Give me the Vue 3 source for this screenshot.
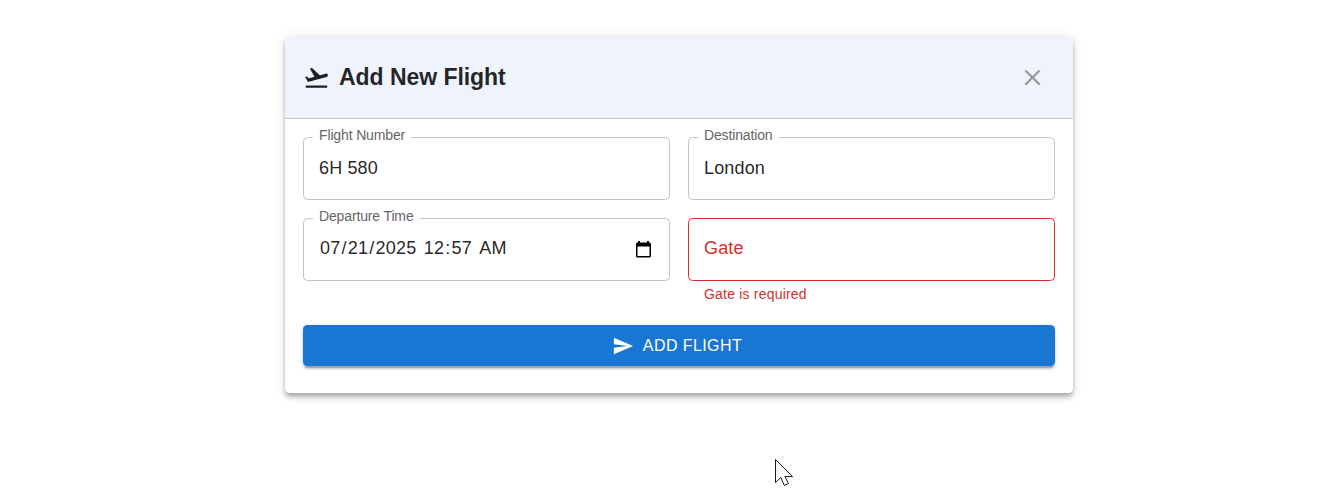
<script setup>
import { ref } from 'vue'

const flightNumber = ref('6H 580')
const destination = ref('London')
const departure = [
  { text: '07', part: true }, { text: '/' },
  { text: '21', part: true }, { text: '/' },
  { text: '2025', part: true }, { text: ' ' },
  { text: '12', part: true }, { text: ':' },
  { text: '57', part: true }, { text: ' ' },
  { text: 'AM', part: true },
]
</script>

<template>
  <main class="page">
    <section class="dialog">
      <header class="header">
        <svg class="plane" viewBox="0 0 24 24">
          <path d="M2.5 19h19v2h-19zm19.57-9.36c-.21-.8-1.04-1.28-1.84-1.06L14.92 10l-6.9-6.43-1.93.51 4.14 7.17-4.97 1.33-1.97-1.54-1.45.39 2.59 4.49s7.12-1.9 16.57-4.43c.81-.23 1.28-1.05 1.07-1.85" />
        </svg>
        <h1 class="title">Add New Flight</h1>
        <button class="close" type="button" aria-label="Close">
          <svg viewBox="0 0 24 24">
            <path d="M19 6.41 17.59 5 12 10.59 6.41 5 5 6.41 10.59 12 5 17.59 6.41 19 12 13.41 17.59 19 19 17.59 13.41 12z" />
          </svg>
        </button>
      </header>
      <form class="form" @submit.prevent>
        <div class="grid">
          <fieldset class="field">
            <legend class="legend"><span class="label number">Flight Number</span></legend>
            <input v-model="flightNumber" class="value" aria-label="Flight Number" />
          </fieldset>
          <fieldset class="field">
            <legend class="legend"><span class="label destination">Destination</span></legend>
            <input v-model="destination" class="value" aria-label="Destination" />
          </fieldset>
          <fieldset class="field">
            <legend class="legend"><span class="label departure">Departure Time</span></legend>
            <div class="value date">
              <span class="parts"><span v-for="(p, i) in departure" :key="i" :class="{ part: p.part }">{{ p.text }}</span></span>
              <svg class="calendar" viewBox="0 0 15 17">
                <path d="M2 0h2v1.5h7V0h2v1.5h.5A1.5 1.5 0 0 1 15 3v12a1.5 1.5 0 0 1-1.5 1.5h-12A1.5 1.5 0 0 1 0 15V3a1.5 1.5 0 0 1 1.500-1.500H2zM1.500 5.500V15h12V5.500z" />
              </svg>
            </div>
          </fieldset>
          <div>
            <div class="field error"><div class="value">Gate</div></div>
            <p class="helper">Gate is required</p>
          </div>
        </div>
        <button class="submit" type="submit">
          <svg viewBox="0 0 24 24"><path d="M2.01 21 23 12 2.01 3 2 10l15 2-15 2z" /></svg>
          <span>ADD FLIGHT</span>
        </button>
      </form>
    </section>
    <svg class="cursor" viewBox="0 0 19 28">
      <path d="M.5.5v23.1l5.3-5.1 3.5 7.9 4.2-1.8-3.6-7h7.6z" />
    </svg>
  </main>
</template>

<style>
body { background: #fff; }
</style>

<style scoped>
* { box-sizing: border-box; }
.page {
  position: relative;
  height: 504px;
  padding: 37px 0 0 285px;
  overflow: hidden;
  font-family: "Liberation Sans", Arial, sans-serif;
  color: rgba(0, 0, 0, .87);
}
.dialog {
  width: 788px;
  height: 356px;
  border-radius: 4.5px;
  overflow: hidden;
  background: #fff;
  box-shadow: 0 2.2px 4.5px -1.1px rgba(0,0,0,.2), 0 4.5px 5.6px rgba(0,0,0,.14), 0 1.1px 11.2px rgba(0,0,0,.12);
}
.header {
  display: flex;
  align-items: center;
  height: 82px;
  padding: 0 27px 0 18px;
  border-bottom: 1px solid #c3c5cc;
  background: #eff3fe;
}
.plane { width: 27px; height: 27px; margin-bottom: 1px; fill: #1f2024; }
.title {
  flex: 1;
  margin: 0 0 2px 9px;
  font-size: 23px;
  line-height: 30px;
  font-weight: 700;
  letter-spacing: -.05px;
}
.close { display: flex; padding: 0; border: 0; background: none; }
.close svg { width: 27px; height: 27px; fill: #9a9b9f; }
.form { padding: 18px; }
.grid { display: grid; grid-template-columns: 367px 367px; gap: 18px; }
.field {
  position: relative;
  min-width: 0;
  height: 63px;
  margin: 0;
  padding: 0;
  border: 1px solid #c4c4c4;
  border-radius: 4.5px;
}
.legend {
  height: 1px;
  margin-left: 9px;
  padding: 0 6px;
  font-size: 14px;
  line-height: 18px;
  letter-spacing: -.14px;
}
.label { display: block; margin-top: -11px; color: #666; white-space: nowrap; }
.number { width: 86px; }
.destination { width: 69px; }
.departure { width: 95px; }
.value {
  display: block;
  width: 100%;
  height: 61px;
  padding: 0 15px;
  border: 0;
  outline: 0;
  background: none;
  color: inherit;
  font: 18px/59px "Liberation Sans", Arial, sans-serif;
  letter-spacing: .15px;
}
.date { display: flex; align-items: center; justify-content: space-between; }
.parts { height: 61px; white-space: pre; letter-spacing: .24px; }
.part { padding: 0 1px; }
.calendar { width: 15px; height: 17px; margin: 0 3px 0 0; fill: #000; }
.error { border-color: #d32f2f; color: #d32f2f; }
.helper {
  margin: 2px 0 0 16px;
  color: #d32f2f;
  font-size: 14px;
  line-height: 22px;
  letter-spacing: .2px;
}
.submit {
  display: flex;
  align-items: center;
  justify-content: center;
  gap: 9px;
  width: 100%;
  height: 41px;
  margin-top: 20px;
  padding: 0 4px 0 0;
  border: 0;
  border-radius: 4.5px;
  background: #1976d2;
  color: #fff;
  font: 16px/28px "Liberation Sans", Arial, sans-serif;
  letter-spacing: .42px;
  box-shadow: 0 3.4px 1.1px -2.2px rgba(0,0,0,.2), 0 2.2px 2.2px rgba(0,0,0,.14), 0 1.1px 5.6px rgba(0,0,0,.12);
}
.submit svg { width: 22px; height: 22px; fill: #fff; }
.cursor {
  position: absolute;
  left: 775px;
  top: 459px;
  width: 19px;
  height: 28px;
  fill: #fff;
  stroke: #15151f;
  stroke-width: 1;
}
</style>
